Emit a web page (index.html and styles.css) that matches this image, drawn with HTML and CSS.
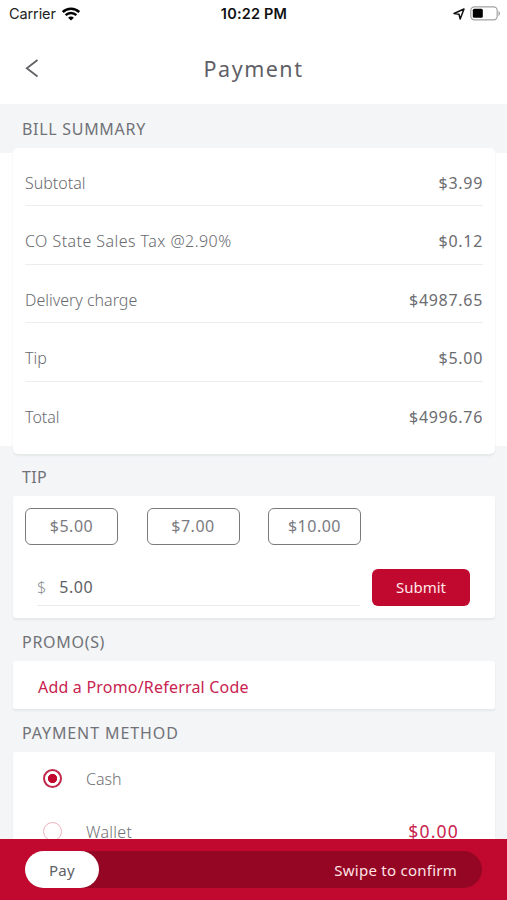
FILE: index.html
```html
<!DOCTYPE html>
<html lang="en">
<head>
<meta charset="utf-8">
<title>Payment</title>
<link rel="stylesheet" href="styles.css">
</head>
<body>
<div class="screen">
  <div class="status">
    <div class="carrier"><span>Carrier</span>
      <svg width="18" height="14" viewBox="0 0 18 14" fill="none" stroke="#000"><path d="M.8 5C5.200.7 12.800.7 17.200 5" stroke-width="2.500"/><path d="M3.600 8.100c3-2.900 7.800-2.900 10.800 0" stroke-width="2.400"/><path d="M9 13.600 6.100 10.700c1.600-1.500 4.200-1.500 5.800 0z" fill="#000" stroke="none"/></svg>
    </div>
    <div class="clock">10:22 PM</div>
    <div class="power">
      <svg width="12" height="12" viewBox="0 0 12 12" fill="none" stroke="#111" stroke-width="1.5" stroke-linejoin="round"><path d="M1 5.500 11 1 7.200 11 6 6.200z"/></svg>
      <svg width="31" height="15" viewBox="0 0 31 15"><rect x=".8" y=".8" width="26.4" height="13" rx="3.6" fill="#fff" stroke="#a3a3a3" stroke-width="1.2"/><rect x="2.8" y="2.8" width="10" height="9" rx="1.5"/><path d="M28.5 5v5c2-.8 2-4.200 0-5z" fill="#a3a3a3"/></svg>
    </div>
  </div>
  <header class="nav">
    <svg width="14" height="20" viewBox="0 0 14 20" fill="none" stroke="#616166" stroke-width="1.8"><path d="M12.500 2 1.800 10.300l10.700 8.200"/></svg>
    <h1>Payment</h1>
  </header>
  <main>
    <h2 class="h-bill">BILL SUMMARY</h2>
    <div class="band">
      <div class="card bill">
        <div class="row"><span>Subtotal</span><b>$3.99</b></div>
        <div class="row"><span class="tax">CO State Sales Tax @2.90%</span><b>$0.12</b></div>
        <div class="row"><span>Delivery charge</span><b>$4987.65</b></div>
        <div class="row"><span>Tip</span><b>$5.00</b></div>
        <div class="row"><span>Total</span><b>$4996.76</b></div>
      </div>
    </div>
    <h2 class="h-tip">TIP</h2>
    <div class="card tip">
      <div class="choices"><button>$5.00</button><button>$7.00</button><button>$10.00</button></div>
      <div class="entry"><div class="field"><i>$</i><span>5.00</span></div><button class="submit">Submit</button></div>
    </div>
    <h2 class="h-promo">PROMO(S)</h2>
    <div class="card promo"><a>Add a Promo/Referral Code</a></div>
    <h2 class="h-method">PAYMENT METHOD</h2>
    <div class="card methods">
      <div class="method"><span class="radio on"></span><span>Cash</span></div>
      <div class="method"><span class="radio"></span><span class="wallet">Wallet</span><b>$0.00</b></div>
    </div>
  </main>
  <footer><div class="track"><div class="knob">Pay</div><span>Swipe to confirm</span></div></footer>
</div>
</body>
</html>
```
FILE: styles.css
```css
* { box-sizing: border-box; }
body { margin: 0; font-family: "Noto Sans", "Open Sans", sans-serif; font-size: 16px; color: #6b6c70; }
.screen { width: 507px; height: 900px; overflow: hidden; display: flex; flex-direction: column; background: #fff; }
svg { display: block; }
h1, h2 { margin: 0; font-weight: 400; }
b, i { font-weight: 400; font-style: normal; }
button { font: inherit; padding: 0; }

.status { height: 27px; flex: none; display: grid; grid-template-columns: 1fr auto 1fr; align-items: center; padding: 0 6px 0 9px; font-family: Inter, sans-serif; font-size: 14.5px; color: #222; }
.carrier { display: flex; align-items: center; gap: 6px; }
.carrier span { letter-spacing: -.1px; }
.clock { font-weight: 600; color: #111; letter-spacing: .2px; margin-right: 2px; }
.power { display: flex; justify-content: flex-end; align-items: center; gap: 5px; }

.nav { height: 77px; flex: none; display: grid; grid-template-columns: 60px 1fr 60px; align-items: center; }
.nav svg { margin: 4px 0 0 25px; }
h1 { text-align: center; font-size: 21.500px; line-height: 30px; letter-spacing: 1.5px; color: #5f6066; padding-top: 7px; }

main { flex: 1; min-height: 0; overflow: hidden; background: #f3f5f7; }
h2 { height: 42px; padding-left: 22px; font-size: 16px; line-height: 46px; letter-spacing: .7px; color: #717277; }
.h-bill { height: 44px; line-height: 50px; }
.h-tip { letter-spacing: .4px; }
.h-method { height: 43px; line-height: 48px; letter-spacing: .9px; }
.h-promo { height: 43px; line-height: 48px; }
.band { background: linear-gradient(#f3f5f7 5px, #fff 5px, #fff 298px, #f3f5f7 298px); }
.card { margin: 0 12px 0 13px; background: #fff; border-radius: 3px; box-shadow: 0 2px 2px #e6e8ea; }
.bill { height: 306px; padding: 0 12px; border-radius: 5px; }
.row { height: 58.600px; display: flex; justify-content: space-between; align-items: flex-end; padding-bottom: 10.500px; line-height: 24px; border-bottom: 1.500px solid #ededef; font-weight: 300; color: #696a6e; }
.row:first-child { height: 58px; }
.row:last-child { border: 0; padding-bottom: 11px; }
.row .tax { letter-spacing: .45px; }
.row b { color: #6b6c70; letter-spacing: .7px; }
.tip { height: 122px; padding: 12px; }
.choices { display: flex; gap: 28.500px; }
.choices button { width: 93px; height: 37px; border: 1.500px solid #7a7b7e; border-radius: 6px; background: #fff; color: #7a7b7f; letter-spacing: .5px; line-height: 32px; padding-bottom: 2px; }
.entry { display: flex; gap: 12px; margin: 24px 0 0 12px; }
.field { width: 323px; height: 37px; border-bottom: 1px solid #e9eaeb; display: flex; gap: 13px; line-height: 36px; color: #606165; letter-spacing: .6px; }
.field i { color: #8d8e91; font-weight: 300; letter-spacing: 0; }
.submit { width: 98px; height: 37px; border: 0; border-radius: 6px; background: #c1082f; color: #ffe6e8; font-size: 15px; padding-bottom: 2px; }
.promo { height: 48px; padding-left: 25px; line-height: 52px; letter-spacing: .2px; }
.promo a { color: #c92350; }
.methods { height: 130px; }
.method { height: 53px; display: flex; align-items: center; padding: 0 36px 0 30px; font-weight: 300; color: #717276; }
.method b { margin-left: auto; color: #c92350; font-size: 17.500px; letter-spacing: 1.200px; margin-top: -2px; }
.wallet { letter-spacing: .3px; }
.radio { width: 19px; height: 19px; margin-right: 24px; border: 1px solid #eeb3c0; border-radius: 50%; }
.radio.on { border: 2px solid #c1284c; background: radial-gradient(circle, #c1082f 4.300px, #fff 5px); }

footer { height: 61px; flex: none; background: #c1082f; padding: 12px 25px; }
.track { height: 37px; border-radius: 19px; background: #950624; display: flex; justify-content: space-between; align-items: center; padding-right: 25px; color: #ffe2e5; font-size: 15px; letter-spacing: .25px; }
.knob { width: 74px; height: 37px; border-radius: 19px; background: #fff; color: #606165; text-align: center; line-height: 38px; }
```
